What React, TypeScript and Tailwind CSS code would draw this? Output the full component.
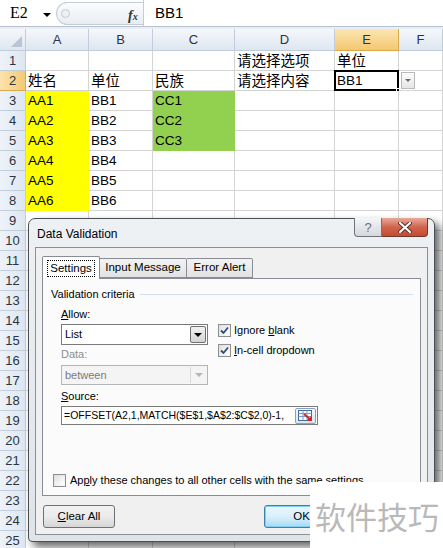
import React from 'react';

type Cell = { t: string; cjk?: boolean };

const COL_LETTERS = ['A', 'B', 'C', 'D', 'E', 'F'];
const ROWS = 25;

// cell contents keyed by "C<row>"
const CELLS: Record<string, Cell> = {
  D1: { t: '请选择选项', cjk: true },
  E1: { t: '单位', cjk: true },
  A2: { t: '姓名', cjk: true },
  B2: { t: '单位', cjk: true },
  C2: { t: '民族', cjk: true },
  D2: { t: '请选择内容', cjk: true },
  E2: { t: 'BB1' },
  A3: { t: 'AA1' }, B3: { t: 'BB1' }, C3: { t: 'CC1' },
  A4: { t: 'AA2' }, B4: { t: 'BB2' }, C4: { t: 'CC2' },
  A5: { t: 'AA3' }, B5: { t: 'BB3' }, C5: { t: 'CC3' },
  A6: { t: 'AA4' }, B6: { t: 'BB4' },
  A7: { t: 'AA5' }, B7: { t: 'BB5' },
  A8: { t: 'AA6' }, B8: { t: 'BB6' },
};

function fillOf(col: string, row: number) {
  if (col === 'A' && row >= 3 && row <= 8) return 'yellow';
  if (col === 'C' && row >= 3 && row <= 5) return 'green';
  return null;
}

function FormulaBar() {
  return (
    <div className="h-[29px] flex bg-[#e9eef4]">
      <div className="h-[27px] w-full flex bg-white border-b border-[#b6c2d0]">
        <div className="w-[56px] flex items-center pl-[10px] relative">
          <span className="text-[16px] leading-none text-black" style={{ fontFamily: '"Liberation Serif", serif' }}>E2</span>
          <span className="absolute left-[43px] top-[13px] w-0 h-0 border-l-[4px] border-r-[4px] border-t-[4px] border-l-transparent border-r-transparent border-t-black" />
        </div>
        <div className="w-[87px] mt-[2px] h-[23px] rounded-l-full border border-[#c4ccd6] border-r-0 bg-gradient-to-b from-[#fbfcfd] to-[#e9edf2] flex items-center relative">
          <span className="ml-[4px] w-[9px] h-[9px] rounded-full border border-[#c2c8d0] bg-[#eef1f4]" />
          <span className="absolute left-[71px] top-[2px] text-[14px] italic font-bold text-[#333]" style={{ fontFamily: '"Liberation Serif", serif' }}>
            f<span className="text-[10px]">x</span>
          </span>
        </div>
        <div className="flex-1 border-l border-[#c4ccd6] flex items-center pl-[11px]">
          <span className="text-[15px] text-black" style={{ fontFamily: '"Liberation Sans", sans-serif' }}>BB1</span>
        </div>
      </div>
    </div>
  );
}

function Sheet() {
  const font = { fontFamily: '"Liberation Sans", sans-serif' };
  const cjkFont = { fontFamily: '"Noto Sans CJK SC", "Noto Sans", sans-serif' };
  return (
    <div className="grid grid-cols-[26px_63px_64px_82px_100px_64px_1fr]" style={font}>
      {/* corner */}
      <div className="h-[22px] bg-gradient-to-b from-[#f5f8fb] to-[#dee6f0] border-r border-b border-[#c2cddb] relative">
        <svg className="absolute right-[3px] bottom-[3px]" width="11" height="11" viewBox="0 0 11 11"><path d="M11 0 L11 11 L0 11 Z" fill="#b9c5d3" /></svg>
      </div>
      {COL_LETTERS.map((c) => (
        <div
          key={c}
          className={
            c === 'E'
              ? 'h-[22px] flex items-center justify-center text-[13px] text-[#2c3440] bg-gradient-to-b from-[#fbe6b3] to-[#f4c86e] border-r border-b border-[#d9a94e]'
              : 'h-[22px] flex items-center justify-center text-[13px] text-[#2c3440] bg-gradient-to-b from-[#f5f8fb] to-[#dee6f0] border-r border-b border-[#c2cddb]'
          }
        >
          {c}
        </div>
      ))}
      {Array.from({ length: ROWS }, (_, i) => i + 1).map((r) => (
        <React.Fragment key={r}>
          <div
            className={
              r === 2
                ? 'h-[20px] flex items-center justify-center text-[13px] text-[#2c3440] bg-gradient-to-r from-[#fbe3ab] to-[#f5c973] border-r border-b border-[#d9a94e]'
                : 'h-[20px] flex items-center justify-center text-[13px] text-[#2c3440] bg-gradient-to-r from-[#eef3f9] to-[#dde6f1] border-r border-b border-[#c2cddb]'
            }
          >
            {r}
          </div>
          {COL_LETTERS.map((c) => {
            const cell = CELLS[`${c}${r}`];
            const fill = fillOf(c, r);
            const cls =
              fill === 'yellow'
                ? 'h-[20px] relative flex items-center pl-[2px] bg-[#ffff00] border-r border-b border-[#ffff00]'
                : fill === 'green'
                ? 'h-[20px] relative flex items-center pl-[2px] bg-[#92d050] border-r border-b border-[#92d050]'
                : 'h-[20px] relative flex items-center pl-[2px] bg-white border-r border-b border-[#d4d4d4]';
            return (
              <div key={c} className={cls}>
                {cell && (
                  <span
                    className={cell.cjk ? 'text-[14.5px] leading-none text-black whitespace-nowrap' : 'text-[13.5px] leading-none text-black whitespace-nowrap'}
                    style={cell.cjk ? cjkFont : font}
                  >
                    {cell.t}
                  </span>
                )}
                {c === 'E' && r === 2 && (
                  <>
                    <span className="absolute -left-[1px] -top-[1px] -right-[1px] -bottom-[1px] border-2 border-black pointer-events-none" />
                    <span className="absolute -right-[3px] -bottom-[3px] w-[5px] h-[5px] bg-black border border-white" />
                  </>
                )}
                {c === 'F' && r === 2 && (
                  <span className="absolute left-[2px] top-[1px] w-[14px] h-[17px] border border-[#b9b9b9] bg-gradient-to-b from-[#fdfdfd] to-[#e6e6e6] flex items-center justify-center">
                    <span className="w-0 h-0 border-l-[3px] border-r-[3px] border-t-[3px] border-l-transparent border-r-transparent border-t-[#6b6b6b]" />
                  </span>
                )}
              </div>
            );
          })}
        </React.Fragment>
      ))}
    </div>
  );
}

function CheckBox({ checked }: { checked?: boolean }) {
  return (
    <span className="w-[13px] h-[13px] border border-[#8e8f8f] bg-gradient-to-br from-[#dcdcdc] to-[#fbfbfb] flex items-center justify-center shrink-0">
      <span className="w-[9px] h-[9px] bg-gradient-to-br from-[#e2e2e2] to-[#ffffff] flex items-center justify-center">
        {checked && (
          <svg width="9" height="9" viewBox="0 0 9 9">
            <path d="M1 4.5 L3.5 7 L8 1.5" fill="none" stroke="#2f4a7d" strokeWidth="1.8" />
          </svg>
        )}
      </span>
    </span>
  );
}

function Dialog() {
  const ui = { fontFamily: '"Liberation Sans", sans-serif' };
  return (
    <div
      className="absolute left-[28px] top-[218px] w-[407px] h-[324px] rounded-t-[7px] rounded-b-[4px] border border-[#4a4f55] bg-gradient-to-b from-[#eef1f4] to-[#dfe4e9] shadow-[5px_5px_8px_rgba(0,0,0,0.6)] flex flex-col px-[6px] pb-[6px]"
      style={ui}
    >
      {/* title bar */}
      <div className="h-[28px] flex items-start relative">
        <span className="mt-[6px] ml-[2px] text-[12px] text-black">Data Validation</span>
        <div className="absolute right-[0px] top-[-1px] flex">
          <span className="w-[28px] h-[19px] rounded-bl-[4px] border border-[#6f7378] border-t-0 bg-gradient-to-b from-[#f4f5f7] to-[#d4d8dd] flex items-center justify-center">
            <span className="text-[13px] text-[#6c7077] leading-none">?</span>
          </span>
          <span className="w-[46px] h-[19px] rounded-br-[4px] border border-[#6f3a30] border-t-0 border-l-0 bg-gradient-to-b from-[#e9a99b] via-[#d0654e] to-[#c54a30] flex items-center justify-center">
            <svg width="14" height="11" viewBox="0 0 14 11">
              <path d="M2 1 L12 10 M12 1 L2 10" stroke="#5a2a22" strokeWidth="4" strokeLinecap="round" />
              <path d="M2 1 L12 10 M12 1 L2 10" stroke="#ffffff" strokeWidth="2.2" strokeLinecap="round" />
            </svg>
          </span>
        </div>
      </div>

      {/* client area */}
      <div className="flex-1 border border-[#8a9098] bg-[#f0f0f0] px-[6px] pt-[7px] flex flex-col">
        {/* tabs */}
        <div className="flex items-end h-[23px] relative z-10">
          <div className="w-[58px] h-[23px] -mb-[1px] border border-[#898c95] border-b-0 rounded-t-[2px] bg-white flex items-start justify-center pt-[3px]">
            <span className="px-[2px] h-[17px] border border-dotted border-black flex items-center text-[11.5px] text-black">Settings</span>
          </div>
          <div className="w-[87px] h-[20px] border border-[#898c95] border-l-0 rounded-tr-[2px] bg-gradient-to-b from-[#f3f3f3] to-[#e2e2e2] flex items-center justify-center text-[11.5px] text-black">
            Input Message
          </div>
          <div className="w-[66px] h-[20px] border border-[#898c95] border-l-0 rounded-tr-[2px] bg-gradient-to-b from-[#f3f3f3] to-[#e2e2e2] flex items-center justify-center text-[11.5px] text-black">
            Error Alert
          </div>
        </div>

        {/* tab panel */}
        <div className="h-[218px] border border-[#898c95] bg-[#fbfbfb] flex flex-col pl-[8px] pr-[7px] pt-[8px] text-[11px] text-black">
          <div className="h-[14px] flex items-center gap-[5px]">
            <span className="whitespace-nowrap">Validation criteria</span>
            <span className="flex-1 h-px bg-[#d5dfe5]" />
          </div>

          <div className="flex mt-[6px] pl-[10px]">
            <div className="w-[147px] flex flex-col">
              <span className="h-[14px] leading-[14px]"><span className="underline">A</span>llow:</span>
              <div className="mt-[3px] h-[21px] border border-[#7a7a7a] bg-white flex items-center justify-between">
                <span className="pl-[3px]">List</span>
                <span className="w-[16px] h-[17px] mr-[1px] border border-[#707070] rounded-[2px] bg-gradient-to-b from-[#f2f2f2] to-[#d4d4d4] flex items-center justify-center">
                  <span className="w-0 h-0 border-l-[4px] border-r-[4px] border-t-[4px] border-l-transparent border-r-transparent border-t-black" />
                </span>
              </div>
              <span className="mt-[2px] h-[14px] leading-[14px] text-[#8d8d8d]">Data:</span>
              <div className="mt-[4px] h-[20px] border border-[#b3b6b9] bg-[#f4f4f4] flex items-center justify-between">
                <span className="pl-[3px] text-[#7a7a7a]">between</span>
                <span className="w-[16px] h-[16px] mr-[1px] flex items-center justify-center border-l border-[#d8d8d8]">
                  <span className="w-0 h-0 border-l-[4px] border-r-[4px] border-t-[4px] border-l-transparent border-r-transparent border-t-[#b5b5b5]" />
                </span>
              </div>
            </div>
            <div className="ml-[10px] pt-[17px] flex flex-col gap-[7px]">
              <div className="h-[13px] flex items-center gap-[3px]">
                <CheckBox checked />
                <span>Ignore <span className="underline">b</span>lank</span>
              </div>
              <div className="h-[13px] flex items-center gap-[3px]">
                <CheckBox checked />
                <span><span className="underline">I</span>n-cell dropdown</span>
              </div>
            </div>
          </div>

          <div className="pl-[10px] flex flex-col">
            <span className="mt-[4px] h-[14px] leading-[14px]"><span className="underline">S</span>ource:</span>
            <div className="mt-[3px] w-[257px] h-[19px] border border-[#7a7a7a] bg-white flex items-center justify-between overflow-hidden">
              <span className="pl-[2px] whitespace-nowrap text-[10.5px]">=OFFSET(A2,1,MATCH($E$1,$A$2:$C$2,0)-1,</span>
              <span className="w-[21px] h-[16px] mr-[1px] border border-[#8aa0bd] rounded-[2px] bg-gradient-to-b from-[#f5f8fc] to-[#dbe5f1] flex items-center justify-center shrink-0">
                <svg width="15" height="12" viewBox="0 0 15 12">
                  <rect x="0.5" y="0.5" width="13" height="10" fill="#ffffff" stroke="#3b69a8" />
                  <path d="M0.5 3.5 H13.5 M0.5 6.5 H13.5 M5 0.5 V10.5 M9 0.5 V10.5" stroke="#7c9cc7" strokeWidth="1" />
                  <path d="M6 4 L13 10 M13 10 L13 6.5 M13 10 L9.5 10" stroke="#d32222" strokeWidth="1.8" />
                </svg>
              </span>
            </div>
          </div>

          <div className="mt-[49px] pl-[2px] h-[13px] flex items-center gap-[4px]">
            <CheckBox />
            <span className="whitespace-nowrap">Ap<span className="underline">p</span>ly these changes to all other cells with the same settings</span>
          </div>
        </div>

        {/* buttons */}
        <div className="mt-[9px] flex items-start text-[11.5px] text-black">
          <div className="ml-[1px] w-[72px] h-[23px] rounded-[3px] border border-[#707070] bg-gradient-to-b from-[#f2f2f2] via-[#ebebeb] to-[#d6d6d6] flex items-center justify-center">
            <span><span className="underline">C</span>lear All</span>
          </div>
          <div className="ml-[149px] w-[75px] h-[23px] rounded-[3px] border border-[#3c7fb1] bg-gradient-to-b from-[#eaf6fd] via-[#d9f0fc] to-[#a7d9f5] shadow-[inset_0_0_0_1px_#7fd0f5] flex items-center justify-center">
            OK
          </div>
        </div>
      </div>
    </div>
  );
}

export default function App() {
  return (
    <div className="relative w-[443px] h-[548px] overflow-hidden bg-white select-none">
      <FormulaBar />
      <Sheet />
      <Dialog />
      {/* watermark */}
      <div className="absolute left-[310px] top-[482px] w-[133px] h-[66px] bg-white flex items-center pl-[5px]">
        <span className="text-[31px] leading-none text-[#b9b9b9] whitespace-nowrap" style={{ fontFamily: '"Noto Sans CJK SC", sans-serif' }}>
          软件技巧
        </span>
      </div>
    </div>
  );
}
